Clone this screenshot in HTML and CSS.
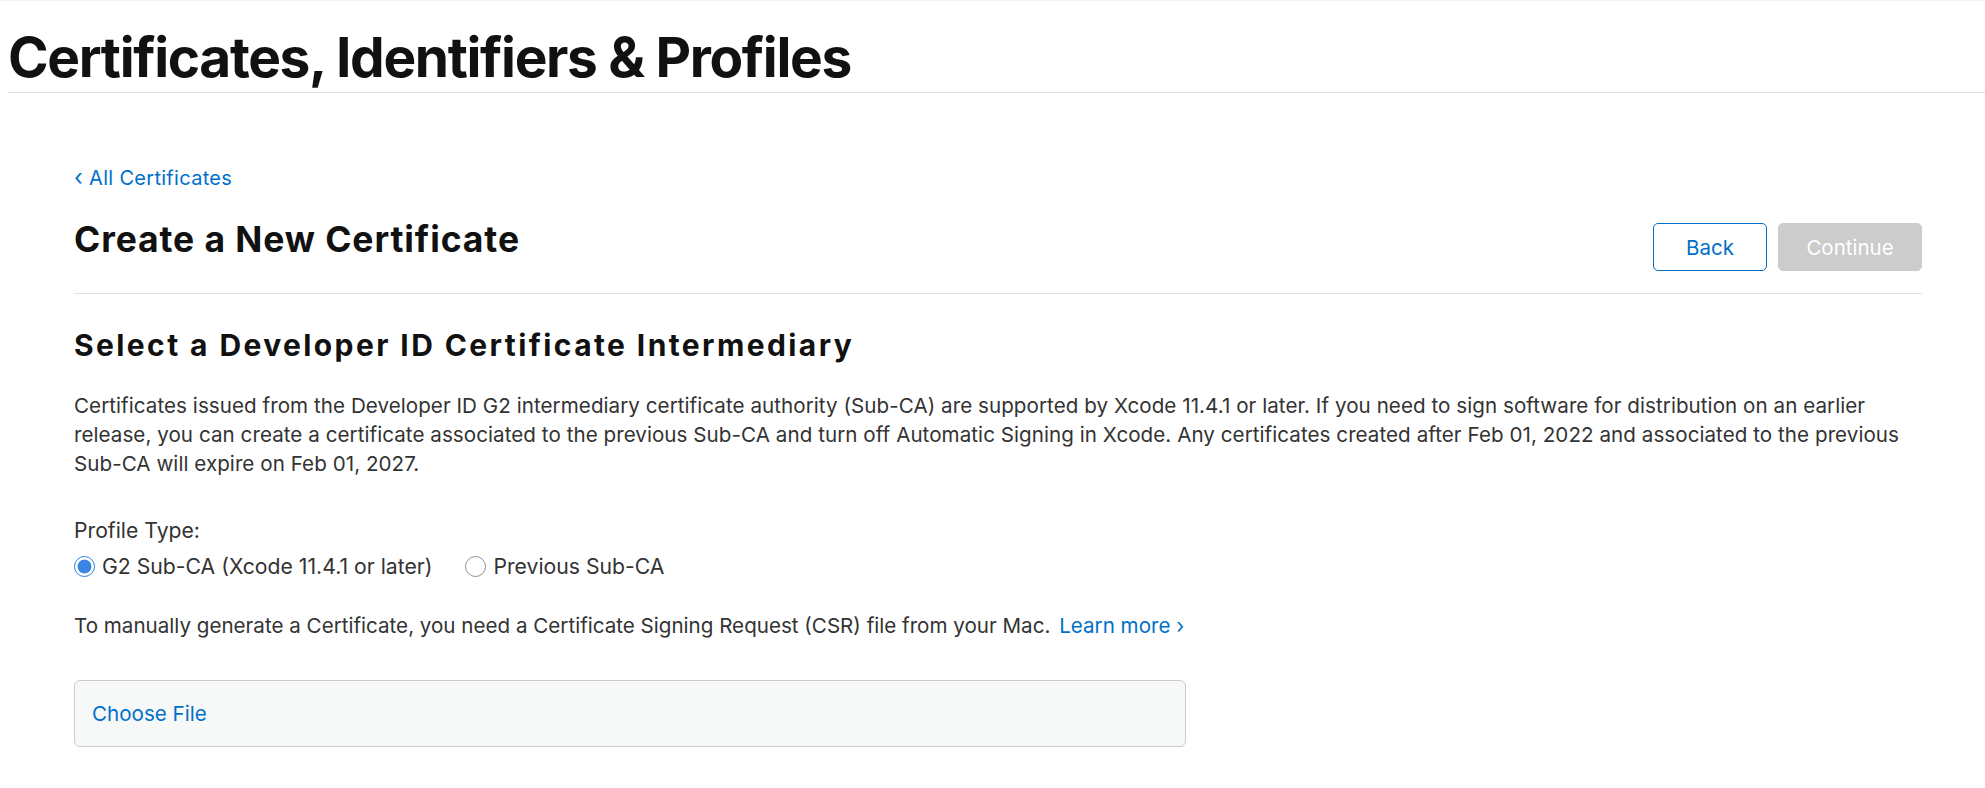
FILE: index.html
```html
<!DOCTYPE html>
<html lang="en">
<head>
<meta charset="utf-8">
<title>Certificates, Identifiers &amp; Profiles</title>
<link rel="stylesheet" href="styles.css">
</head>
<body>
<header class="page-header">
  <h1 class="page-title">Certificates, Identifiers &amp; Profiles</h1>
</header>
<main class="content">
  <a class="back-link" href="#"><span class="chev">‹</span> All Certificates</a>
  <div class="title-row">
    <h2 class="section-title">Create a New Certificate</h2>
    <div class="actions">
      <button class="btn btn-secondary" type="button">Back</button>
      <button class="btn btn-disabled" type="button" disabled>Continue</button>
    </div>
  </div>
  <h3 class="sub-title">Select a Developer ID Certificate Intermediary</h3>
  <p class="desc">Certificates issued from the Developer ID G2 intermediary certificate authority (Sub-CA) are supported by Xcode 11.4.1 or later. If you need to sign software for distribution on an earlier release, you can create a certificate associated to the previous Sub-CA and turn off Automatic Signing in Xcode. Any certificates created after Feb 01, 2022 and associated to the previous Sub-CA will expire on Feb 01, 2027.</p>
  <div class="field">
    <div class="field-label">Profile Type:</div>
    <div class="radios">
      <label class="radio"><span class="dot checked"></span>G2 Sub-CA (Xcode 11.4.1 or later)</label>
      <label class="radio"><span class="dot"></span>Previous Sub-CA</label>
    </div>
  </div>
  <p class="csr">To manually generate a Certificate, you need a Certificate Signing Request (CSR) file from your Mac. <a class="link" href="#">Learn more ›</a></p>
  <div class="file-box"><span class="choose">Choose File</span></div>
</main>
</body>
</html>
```
FILE: styles.css
```css
* { box-sizing: border-box; }
html, body { margin: 0; padding: 0; background: #fff; }
body {
  font-family: Inter, "Noto Sans", sans-serif;
  color: #333;
  border-top: 1px solid #f2f2f2;
  font-size: 20.6px;
}
.page-header {
  margin-left: 8px;
  border-bottom: 1px solid #e0e0e0;
  height: 92px;
}
.page-title {
  margin: 0;
  padding-top: 24px;
  font-size: 55px;
  line-height: 64px;
  font-weight: 700;
  letter-spacing: -1.35px;
  color: #111;
}
.content {
  padding: 0 63px 0 74px;
}
.back-link {
  display: block;
  margin-top: 70px;
  font-size: 20px;
  letter-spacing: 0.3px;
  line-height: 28px;
  color: #0070c9;
  text-decoration: none;
}
.chev { font-size: 23px; }
.title-row {
  display: flex;
  justify-content: space-between;
  align-items: flex-start;
  border-bottom: 1px solid #e0e0e0;
  padding-bottom: 22px;
  margin-top: 26px;
}
.section-title {
  margin: 0;
  font-size: 35.5px;
  line-height: 44px;
  font-weight: 700;
  color: #111;
  letter-spacing: 0.9px;
}
.actions { display: flex; gap: 11px; margin-top: 5px; }
.btn {
  height: 48px;
  border-radius: 5px;
  font-family: inherit;
  font-size: 20.5px;
  padding: 0;
}
.btn-secondary {
  width: 114px;
  background: #fff;
  color: #0070c9;
  border: 1px solid #0070c9;
}
.btn-disabled {
  width: 144px;
  background: #ccc;
  color: #fff;
  border: 1px solid #ccc;
}
.sub-title {
  margin: 31px 0 0;
  font-size: 30px;
  line-height: 40px;
  font-weight: 700;
  color: #111;
  letter-spacing: 2.4px;
}
.desc {
  margin: 26px 0 0;
  line-height: 29px;
  letter-spacing: 0.05px;
}
.field { margin-top: 38px; }
.field-label { line-height: 28px; font-size: 21.2px; }
.radios { display: flex; gap: 33px; margin-top: 8px; line-height: 28px; font-size: 21.2px; }
.radio { display: flex; align-items: center; gap: 7px; }
.dot {
  width: 21px; height: 21px;
  border-radius: 50%;
  border: 1px solid #8e8e8e;
  background: #fff;
  flex: none;
}
.dot.checked {
  border: 1.5px solid #2f7de1;
  background: radial-gradient(circle, #3a85e6 0 6.5px, #fff 7.3px);
}
.csr { margin: 32px 0 0; line-height: 28px; }
.link { color: #0070c9; text-decoration: none; margin-left: 3px; }
.file-box {
  margin-top: 40px;
  width: 1112px;
  height: 67px;
  border: 1px solid #ccc;
  border-radius: 6px;
  background: #f7f8f8;
  display: flex;
  align-items: center;
  padding-left: 17px;
}
.choose { color: #0070c9; }
```
